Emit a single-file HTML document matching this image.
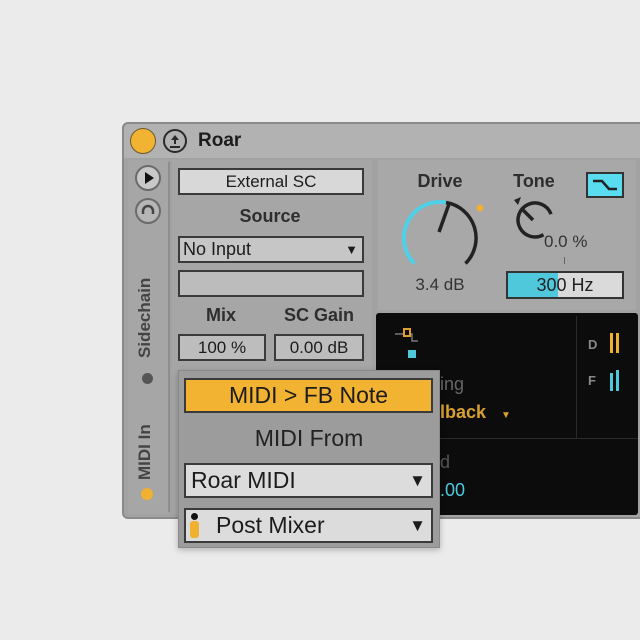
<!DOCTYPE html>
<html><head><style>
*{margin:0;padding:0;box-sizing:border-box}
body{width:640px;height:640px;background:#ebebeb;position:relative;overflow:hidden;font-family:"Liberation Sans","DejaVu Sans",sans-serif;color:#1c1c1c}
.a{position:absolute}
.box{position:absolute;border:2px solid #3a3a3a;background:#cfcfcf;text-align:center}
.t{position:absolute;text-align:center;white-space:nowrap}
</style></head><body>
<div class="a" style="left:122px;top:122px;width:530px;height:397px;background:#a2a2a2;border:2px solid #8a8a8a;border-radius:6px"></div>
<div class="a" style="left:124px;top:124px;width:520px;height:34px;background:#b2b2b2;border-radius:5px 0 0 0"></div>
<div class="a" style="left:130px;top:128px;width:26px;height:26px;border-radius:50%;background:#f2b232;border:1.5px solid #6a5a30"></div>
<div class="a" style="left:163px;top:129px;width:24px;height:24px;border-radius:50%;border:2px solid #2a2a2a"></div>
<svg class="a" style="left:163px;top:129px" width="24" height="24"><path d="M12 6 L8 11 H11 V15 H13 V11 H16 Z" fill="#2a2a2a"/><rect x="7" y="17" width="10" height="2" fill="#2a2a2a"/></svg>
<div class="a" style="left:198px;top:130px;font-size:19px;font-weight:bold">Roar</div>
<div class="a" style="left:128px;top:160px;width:40px;height:354px;background:#a6a6a6"></div>
<div class="a" style="left:168px;top:162px;width:2px;height:350px;background:#8e8e8e"></div>
<div class="a" style="left:135px;top:165px;width:26px;height:26px;border-radius:50%;border:2px solid #6a6a6a;background:#c8c8c8"></div>
<svg class="a" style="left:135px;top:165px" width="26" height="26"><path d="M10 7 L19 13 L10 19 Z" fill="#111"/></svg>
<div class="a" style="left:135px;top:198px;width:26px;height:26px;border-radius:50%;border:2px solid #6a6a6a;background:#b6b6b6"></div>
<svg class="a" style="left:135px;top:198px" width="26" height="26"><path d="M8 16 V13 A5 5 0 0 1 18 13 V16" stroke="#444" stroke-width="2.5" fill="none"/></svg>
<div class="a" style="left:135px;top:358px;font-size:17px;font-weight:bold;color:#444;transform:rotate(-90deg);transform-origin:0 0;white-space:nowrap">Sidechain</div>
<div class="a" style="left:142px;top:373px;width:11px;height:11px;border-radius:50%;background:#555"></div>
<div class="a" style="left:135px;top:480px;font-size:17px;font-weight:bold;color:#444;transform:rotate(-90deg);transform-origin:0 0;white-space:nowrap">MIDI In</div>
<div class="a" style="left:141px;top:488px;width:12px;height:12px;border-radius:50%;background:#f0b030"></div>
<div class="a" style="left:172px;top:160px;width:200px;height:354px;background:#a6a6a6"></div>
<div class="box" style="left:178px;top:168px;width:186px;height:27px;background:#d8d8d8;font-size:17px;line-height:23px">External SC</div>
<div class="t" style="left:172px;top:206px;width:196px;font-size:18px;font-weight:bold;color:#2e2e2e">Source</div>
<div class="box" style="left:178px;top:236px;width:186px;height:27px;text-align:left;padding-left:3px;font-size:18px;line-height:23px;background:#c6c6c6">No Input<span style="position:absolute;right:4px;top:0;font-size:13px">▼</span></div>
<div class="box" style="left:178px;top:270px;width:186px;height:27px;background:#bcbcbc"></div>
<div class="t" style="left:190px;top:305px;width:62px;font-size:18px;font-weight:bold;color:#2e2e2e">Mix</div>
<div class="t" style="left:272px;top:305px;width:94px;font-size:18px;font-weight:bold;color:#2e2e2e">SC Gain</div>
<div class="box" style="left:178px;top:334px;width:88px;height:27px;font-size:17px;line-height:23px;background:#bdbdbd">100 %</div>
<div class="box" style="left:274px;top:334px;width:90px;height:27px;font-size:17px;line-height:23px;background:#bdbdbd">0.00 dB</div>
<div class="a" style="left:378px;top:160px;width:258px;height:150px;background:#a8a8a8"></div>
<div class="t" style="left:410px;top:171px;width:60px;font-size:18px;font-weight:bold;color:#2e2e2e">Drive</div>
<svg class="a" style="left:395px;top:190px" width="100" height="90"><path d="M19.5 73.5 A36 36 0 0 1 51 12.5" stroke="#4fd0e6" stroke-width="4" fill="none"/><path d="M51 12.5 A36 36 0 0 1 70.5 73.5" stroke="#222" stroke-width="3.5" fill="none"/><path d="M44 42 L54 14" stroke="#222" stroke-width="3.5"/><circle cx="85" cy="18" r="3.5" fill="#f0b030"/></svg>
<div class="t" style="left:400px;top:275px;width:80px;font-size:17px;color:#333">3.4 dB</div>
<div class="t" style="left:504px;top:171px;width:60px;font-size:18px;font-weight:bold;color:#2e2e2e">Tone</div>
<div class="a" style="left:586px;top:172px;width:38px;height:26px;background:#59dcf0;border:2px solid #333"></div>
<svg class="a" style="left:588px;top:174px" width="34" height="22"><path d="M5 7 H14 L21 15 H29" stroke="#222" stroke-width="2.5" fill="none"/></svg>
<svg class="a" style="left:505px;top:192px" width="60" height="60"><path d="M38.5 42.7 A17 17 0 1 1 46 22.2" stroke="#222" stroke-width="3.5" fill="none"/><path d="M9 8 L16 5 L13 13 Z" fill="#222"/><path d="M18 18 L28 28" stroke="#222" stroke-width="3.5"/></svg>
<div class="a" style="left:544px;top:232px;font-size:17px;color:#333">0.0 %</div>
<div class="a" style="left:564px;top:257px;width:1px;height:7px;background:#666"></div>
<div class="a" style="left:506px;top:271px;width:118px;height:28px;border:2px solid #333;background:#dadada"></div>
<div class="a" style="left:508px;top:273px;width:50px;height:24px;background:#4fc8dc"></div>
<div class="t" style="left:508px;top:275px;width:114px;font-size:18px;color:#222">300 Hz</div>
<div class="a" style="left:376px;top:313px;width:262px;height:202px;background:#0c0c0c;border-radius:3px"></div>
<div class="a" style="left:576px;top:316px;width:1px;height:122px;background:#2a2a2a"></div>
<div class="a" style="left:376px;top:438px;width:262px;height:1px;background:#2a2a2a"></div>
<svg class="a" style="left:394px;top:326px" width="40" height="36"><path d="M1 8 H10 M16 8 H18 V15 H24" stroke="#777" stroke-width="1.5" fill="none"/><rect x="10" y="3" width="6" height="7" stroke="#e0a030" stroke-width="2" fill="none"/><rect x="14" y="24" width="8" height="8" fill="#4fc8dc"/></svg>
<div class="a" style="left:588px;top:337px;font-size:13px;font-weight:bold;color:#888">D</div>
<div class="a" style="left:610px;top:333px;width:3px;height:20px;background:#f0b030"></div><div class="a" style="left:616px;top:333px;width:3px;height:20px;background:#f0b030"></div>
<div class="a" style="left:588px;top:373px;font-size:13px;font-weight:bold;color:#888">F</div>
<div class="a" style="left:610px;top:373px;width:3px;height:18px;background:#4fc8dc"></div><div class="a" style="left:616px;top:370px;width:3px;height:21px;background:#4fc8dc"></div>
<div class="a" style="left:440px;top:374px;font-size:18px;color:#666">ing</div>
<div class="a" style="left:440px;top:402px;font-size:18px;color:#d8a030;font-weight:bold">lback <span style="font-size:10px;margin-left:10px">▼</span></div>
<div class="a" style="left:440px;top:452px;font-size:18px;color:#555">d</div>
<div class="a" style="left:440px;top:480px;font-size:18px;color:#4fc8dc">.00</div>
<div class="a" style="left:178px;top:370px;width:262px;height:178px;background:#9c9c9c;border:1px solid #8a8a8a;box-shadow:0 2px 6px rgba(0,0,0,.25)"></div>
<div class="box" style="left:184px;top:378px;width:249px;height:35px;background:#f2b232;font-size:23px;line-height:31px">MIDI &gt; FB Note</div>
<div class="t" style="left:178px;top:425px;width:262px;font-size:23px;color:#222">MIDI From</div>
<div class="box" style="left:184px;top:463px;width:249px;height:35px;background:#dcdcdc;text-align:left;padding-left:5px;font-size:23px;line-height:31px">Roar MIDI<span style="position:absolute;right:5px;top:0;font-size:17px">▼</span></div>
<div class="box" style="left:184px;top:508px;width:249px;height:35px;background:#dcdcdc;text-align:left;padding-left:30px;font-size:23px;line-height:31px">Post Mixer<span style="position:absolute;right:5px;top:0;font-size:17px">▼</span></div>
<div class="a" style="left:191px;top:513px;width:7px;height:7px;border-radius:50%;background:#111"></div>
<div class="a" style="left:190px;top:521px;width:9px;height:17px;border-radius:3px;background:#f0b030"></div>
</body></html>
